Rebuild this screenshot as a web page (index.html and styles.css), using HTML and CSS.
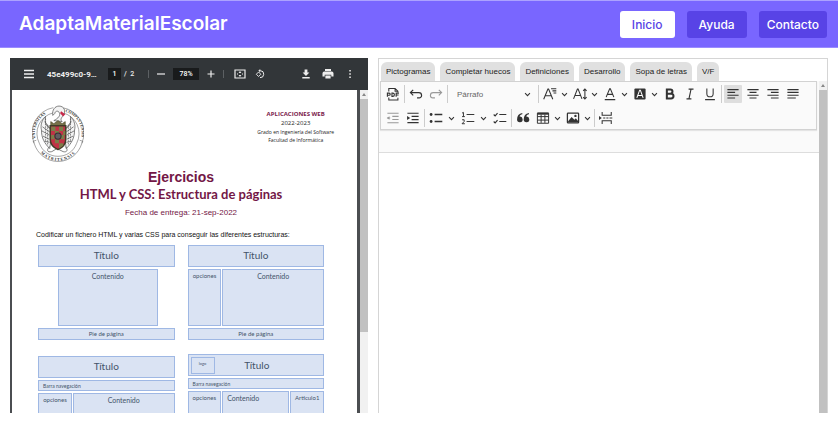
FILE: index.html
```html
<!DOCTYPE html>
<html lang="es">
<head>
<meta charset="utf-8">
<meta name="viewport" content="width=device-width, initial-scale=1">
<title>AdaptaMaterialEscolar</title>
<link rel="stylesheet" href="styles.css">
</head>
<body>
<svg class="defs" aria-hidden="true">
  <symbol id="chev" viewBox="0 0 10 10"><path d="M1.5 3.2 5 6.7l3.500-3.500" fill="none" stroke="currentColor" stroke-width="1.500"/></symbol>
</svg>
<header class="site-header">
  <h1 class="brand">AdaptaMaterialEscolar</h1>
  <nav class="site-nav">
    <a class="nav-link active" href="#inicio">Inicio</a>
    <a class="nav-link" href="#ayuda">Ayuda</a>
    <a class="nav-link wide" href="#contacto">Contacto</a>
  </nav>
</header>

<main class="workspace">
  <section class="viewer" aria-label="Visor PDF">
    <div class="viewer-bar">
      <button class="vbtn menu" aria-label="Menú"><svg viewBox="0 0 10 10"><path d="M0 1.500h10M0 5h10M0 8.500h10" stroke="currentColor" stroke-width="1.300"/></svg></button>
      <span class="file-name">45e499c0-9…</span>
      <input class="dark-box page-no" aria-label="Página" value="1">
      <span class="page-total">/&nbsp; 2</span>
      <span class="vsep"></span>
      <button class="vbtn near" aria-label="Alejar"><svg viewBox="0 0 10 10"><path d="M1 5h8" stroke="currentColor" stroke-width="1.200"/></svg></button>
      <input class="dark-box zoom" aria-label="Zoom" value="78%">
      <button class="vbtn near" aria-label="Acercar"><svg viewBox="0 0 10 10"><path d="M1.500 5h7M5 1.500v7" stroke="currentColor" stroke-width="1.200"/></svg></button>
      <span class="vsep"></span>
      <button class="vbtn fit" aria-label="Ajustar"><svg viewBox="0 0 12 10"><path d="M1 1h10v8H1z" fill="none" stroke="currentColor" stroke-width="1.200"/><path d="M6 2 4.600 3.900h2.800zM6 8 4.600 6.100h2.800z" fill="currentColor"/><path d="M3 5h1M8 5h1" stroke="currentColor"/></svg></button>
      <button class="vbtn rotate" aria-label="Girar"><svg viewBox="0 0 12 12"><path d="M4.300 3.600 7 6.300 4.300 9 1.600 6.300z" fill="none" stroke="currentColor" stroke-width="1.100"/><path d="M5.500 2h1a4.200 4.200 0 1 1-.5 8.400" fill="none" stroke="currentColor" stroke-width="1.200"/><path d="M6.300 0v4L4 2z" fill="currentColor"/></svg></button>
      <span class="grow"></span>
      <button class="vbtn" aria-label="Descargar"><svg viewBox="0 0 10 10"><path d="M3.600.5h2.800v3h2L5 7 1.600 3.500h2zM1.300 8h7.400v1.400H1.300z" fill="currentColor"/></svg></button>
      <button class="vbtn print" aria-label="Imprimir"><svg viewBox="0 0 12 10"><path d="M3 0h6v2H3zM2.200 2.600h7.600A1.800 1.800 0 0 1 11.500 4.300V7.500H9.300V5.800H2.700v1.700H.5V4.300A1.800 1.800 0 0 1 2.200 2.600zM3.400 6.500h5.200v3H3.400z" fill="currentColor"/></svg></button>
      <button class="vbtn" aria-label="Más"><svg viewBox="0 0 10 10"><path d="M4.300 1h1.500v1.500H4.300zM4.300 4.300h1.500v1.500H4.300zM4.300 7.600h1.500v1.500H4.300z" fill="currentColor"/></svg></button>
    </div>
    <div class="viewer-body">
      <article class="page">
        <div class="doc-head">
          <svg class="crest" viewBox="0 0 50 56" role="img" aria-label="Escudo">
            <defs>
              <path id="arc-l" d="M4.500 37A21.500 21.500 0 0 1 21 7"/>
              <path id="arc-r" d="M30 7A21.500 21.500 0 0 1 46 37"/>
              <path id="arc-b" d="M5 42A22 22 0 0 0 45 42"/>
            </defs>
            <g fill="none" stroke="#555" stroke-width=".5">
              <path d="M20.500 3.500A25 25 0 0 0 2 38M20.500 8.500A20.500 20.500 0 0 0 7 38"/>
              <path d="M29.500 3.500A25 25 0 0 1 48 38M29.500 8.500A20.500 20.500 0 0 1 43 38"/>
              <path d="M2 38 1 36l3-1M48 38l1-2-3-1M2 38c3 10 12 17.500 23 17.500S45 48 48 38"/>
              <path d="M7 38c3 8 10 12.500 18 12.500S40 46 43 38"/>
            </g>
            <g class="crest-text">
              <text><textPath href="#arc-l" startOffset="4">VNIVERSITAS</textPath></text>
              <text><textPath href="#arc-r" startOffset="2">COMPLVTENSIS</textPath></text>
              <text><textPath href="#arc-b" startOffset="6">M A T R I T E N S I S</textPath></text>
            </g>
            <g fill="#f4f4f4" stroke="#555" stroke-width=".7">
              <path d="M18 24C14 22 12 19 13 12c-4 4-5 9-4 13 0 8 3 13 8 18l1-7z"/>
              <path d="M32 24c4-2 6-5 5-12 4 4 5 9 4 13 0 8-3 13-8 18l-1-7z"/>
              <path d="M10 22l7 5M9.500 26l7 4M10.500 31l6 3M12 36l5 1M12 17l5 6M40 22l-7 5M40.500 26l-7 4M39.500 31l-6 3M38 36l-5 1M38 17l-5 6" fill="none"/>
              <path d="M13 14v22M15 20v20M37 14v22M35 20v20" fill="none" stroke-dasharray="1.500 1"/>
              <path d="M21 16c4-2 7-5 5-8-1-2-4-1-4 1l-2 2c-1-5 2-9 6-9 5 0 7 5 4 9-2 3-3 4-1 6z"/>
              <path d="M17 41c-3 3-3 6 2 5l5-3 6 3c4 1 5-2 2-5" fill="none"/>
            </g>
            <path d="M28 7l4 3-2 2-3-3z" fill="#c72a4a"/>
            <path d="M18 17l3 2 4-3 4 3 3-2v5H18z" fill="#77714a" stroke="#494725" stroke-width=".6"/>
            <path d="M17.500 21h15v13c0 5-3 8-7.500 10-4.500-2-7.500-5-7.500-10z" fill="#c13246" stroke="#3f3d28" stroke-width="1.400"/>
            <path d="M18.500 22h4v4h-4zM26 22h4v4h-4zM22 26h4v4h-4zM30 26h2v4h-2zM18.500 30h3v4h-3zM27.500 30h3.500v4h-3.500zM22 34h4v4h-4zM26 38h4v2l-4 3z" fill="#7b7e49"/>
            <circle cx="25" cy="31" r="3" fill="#625d61" stroke="#322f35"/>
          </svg>
          <div class="course">
            <strong>APLICACIONES WEB</strong>
            <span class="year">2022-2023</span>
            <span>Grado en Ingeniería del Software</span>
            <span>Facultad de Informática</span>
          </div>
        </div>
        <h2 class="doc-title">Ejercicios</h2>
        <h3 class="doc-sub">HTML y CSS: Estructura de páginas</h3>
        <p class="due">Fecha de entrega: 21-sep-2022</p>
        <p class="intro">Codificar un fichero HTML y varias CSS para conseguir las diferentes estructuras:</p>
        <div class="diagrams">
          <div class="diagram">
            <div class="box big">Título</div>
            <div class="box body inset">Contenido</div>
            <div class="box foot">Pie de página</div>
          </div>
          <div class="diagram">
            <div class="box big">Título</div>
            <div class="cols two"><div class="box body small">opciones</div><div class="box body">Contenido</div></div>
            <div class="box foot">Pie de página</div>
          </div>
          <div class="diagram lower">
            <div class="box big">Título</div>
            <div class="box navrow">Barra navegación</div>
            <div class="cols two"><div class="box body small">opciones</div><div class="box body">Contenido</div></div>
          </div>
          <div class="diagram">
            <div class="box big with-logo"><span class="box logo">logo</span><span>Título</span></div>
            <div class="box navrow">Barra navegación</div>
            <div class="cols three"><div class="box body small">opciones</div><div class="box body start">Contenido</div><div class="box body small">Articulo1</div></div>
          </div>
        </div>
      </article>
      <div class="scroll"><span class="arrow"></span><span class="thumb"></span></div>
    </div>
  </section>

  <section class="editor" aria-label="Editor">
    <div class="tabs">
      <button class="tab">Pictogramas</button>
      <button class="tab">Completar huecos</button>
      <button class="tab">Definiciones</button>
      <button class="tab">Desarrollo</button>
      <button class="tab">Sopa de letras</button>
      <button class="tab">V/F</button>
    </div>
    <div class="editor-body">
      <div class="editor-main">
        <div class="toolbar">
          <div class="row">
            <button class="tb" aria-label="Exportar PDF"><svg viewBox="0 0 20 20"><path d="M4 6.500V2h9l4 4v2M13 2v4h4M4 15v3.500h13V15.500" fill="none" stroke="currentColor" stroke-width="1.500"/><path d="M2 14V8.800h2.500a1.500 1.500 0 0 1 0 3H2M8.500 8.800v4.600h1.200a2.300 2.300 0 0 0 0-4.600zM14.500 14V8.800h4M14.500 11.500H18" fill="none" stroke="currentColor" stroke-width="1.600"/></svg></button>
            <span class="sep"></span>
            <button class="tb" aria-label="Deshacer"><svg viewBox="0 0 20 20"><path d="M6 4 2 8l4 4M2.500 8h11.500a4 4 0 0 1 4 4v0a3.500 3.500 0 0 1-3.500 3.500h-3" fill="none" stroke="currentColor" stroke-width="1.700"/></svg></button>
            <button class="tb dim" aria-label="Rehacer"><svg viewBox="0 0 20 20"><path d="m14 4 4 4-4 4M17.500 8H6a4 4 0 0 0-4 4v0A3.500 3.500 0 0 0 5.500 15.500h3" fill="none" stroke="currentColor" stroke-width="1.600"/></svg></button>
            <span class="sep"></span>
            <span class="heading-pick"><select aria-label="Estilo"><option>Párrafo</option></select><svg class="chev"><use href="#chev"/></svg></span>
            <span class="sep"></span>
            <button class="tb drop" aria-label="Fuente"><svg viewBox="0 0 20 20"><path d="M1 17.500 7 3h1L14 17.500M3 12.500h9M11.500 2.500H19M13.500 5.500H19M15 8.500h4" fill="none" stroke="currentColor" stroke-width="1.500"/></svg><svg class="chev"><use href="#chev"/></svg></button>
            <button class="tb drop" aria-label="Tamaño"><svg viewBox="0 0 20 20"><path d="M.8 17 6.300 3h1L12.800 17M2.600 12.200h8.300M17 3v14M14.500 5.500 17 2.800l2.500 2.700M14.500 14.500 17 17.200l2.500-2.700" fill="none" stroke="currentColor" stroke-width="1.500"/></svg><svg class="chev"><use href="#chev"/></svg></button>
            <button class="tb drop" aria-label="Color"><svg viewBox="0 0 20 20"><path d="M4.500 14.500 9.500 2.500h1l5 12M6.300 10.500h7.400M2.500 18h15" fill="none" stroke="currentColor" stroke-width="1.500"/></svg><svg class="chev"><use href="#chev"/></svg></button>
            <button class="tb drop" aria-label="Fondo"><svg viewBox="0 0 20 20"><rect x="2" y="2" width="16" height="16" rx="1.500" fill="currentColor"/><path d="M5.500 15.500 9.500 4.500h1l4 11M7 12h6" fill="none" stroke="#fff" stroke-width="1.500"/></svg><svg class="chev"><use href="#chev"/></svg></button>
            <button class="tb" aria-label="Negrita"><svg viewBox="0 0 20 20"><path d="M5.500 3.500H10.500a3 3 0 0 1 0 6H5.500zM5.500 9.500h6a3.300 3.300 0 0 1 0 7h-6z" fill="none" stroke="currentColor" stroke-width="2.900"/></svg></button>
            <button class="tb" aria-label="Cursiva"><svg viewBox="0 0 20 20"><path d="M8 3h7M5 17h7M11.500 3l-3 14" fill="none" stroke="currentColor" stroke-width="1.600"/></svg></button>
            <button class="tb" aria-label="Subrayado"><svg viewBox="0 0 20 20"><path d="M5.500 2v7.500a4.500 4.500 0 0 0 9 0V2M3 18h14" fill="none" stroke="currentColor" stroke-width="1.500"/></svg></button>
            <span class="sep"></span>
            <button class="tb on" aria-label="Izquierda" aria-pressed="true"><svg viewBox="0 0 20 20"><path d="M2 3.700h16M2 7.700h11M2 11.700h16M2 15.700h11" stroke="currentColor" stroke-width="1.600"/></svg></button>
            <button class="tb" aria-label="Centro"><svg viewBox="0 0 20 20"><path d="M2 3.700h16M5 7.700h10M2 11.700h16M5 15.700h10" stroke="currentColor" stroke-width="1.600"/></svg></button>
            <button class="tb" aria-label="Derecha"><svg viewBox="0 0 20 20"><path d="M2 3.700h16M7 7.700h11M2 11.700h16M7 15.700h11" stroke="currentColor" stroke-width="1.600"/></svg></button>
            <button class="tb" aria-label="Justificar"><svg viewBox="0 0 20 20"><path d="M2 3.700h16M2 7.700h16M2 11.700h16M2 15.700h12" stroke="currentColor" stroke-width="1.600"/></svg></button>
          </div>
          <div class="row">
            <button class="tb dim" aria-label="Reducir sangría"><svg viewBox="0 0 20 20"><path d="M2 3.200h16M9 7.700h9M9 12.200h9M2 16.700h16M2 10h4" stroke="currentColor" stroke-width="1.500"/><path d="M5 7.500v5L1 10z" fill="currentColor"/></svg></button>
            <button class="tb" aria-label="Aumentar sangría"><svg viewBox="0 0 20 20"><path d="M2 3.200h16M8 7.700h10M8 12.200h10M2 16.700h16" stroke="currentColor" stroke-width="1.700"/><path d="M1.500 7v6L6 10z" fill="currentColor"/></svg></button>
            <span class="sep"></span>
            <button class="tb drop split" aria-label="Lista"><svg viewBox="0 0 20 20"><path d="M8 5h11M8 15h11" stroke="currentColor" stroke-width="1.800"/><circle cx="3" cy="5" r="2" fill="currentColor"/><circle cx="3" cy="15" r="2" fill="currentColor"/></svg><svg class="chev"><use href="#chev"/></svg></button>
            <button class="tb drop split" aria-label="Lista numerada"><svg viewBox="0 0 20 20"><path d="M8 5h11M8 15h11M1.500 3 3.500 2v6M1.500 8h4M1.500 12.500h3V15l-3 3.200h4" fill="none" stroke="currentColor" stroke-width="1.400"/></svg><svg class="chev"><use href="#chev"/></svg></button>
            <button class="tb" aria-label="Tareas"><svg viewBox="0 0 20 20"><path d="M9 5h10M9 15h10M1 5l2 2 3.500-4M1 15l2 2 3.500-4" fill="none" stroke="currentColor" stroke-width="1.600"/></svg></button>
            <span class="sep"></span>
            <button class="tb" aria-label="Cita"><svg viewBox="0 0 20 20"><path d="M9 3C4 4 1.500 7 1.500 12a4 4 0 1 0 3.500-4c.5-2 2-3 4-3.500zM18.500 3c-5 1-7.500 4-7.500 9a4 4 0 1 0 3.500-4c.5-2 2-3 4-3.500z" fill="currentColor"/></svg></button>
            <button class="tb drop" aria-label="Tabla"><svg viewBox="0 0 20 20"><path d="M2 3h16v14.500H2zM2 8h16M2 13h16M7.300 5v12M12.700 5v12" fill="none" stroke="currentColor" stroke-width="1.400"/><path d="M2 2.300h16v3H2z" fill="currentColor"/></svg><svg class="chev"><use href="#chev"/></svg></button>
            <button class="tb drop" aria-label="Imagen"><svg viewBox="0 0 20 20"><rect x="2" y="3" width="16" height="14" rx="1" fill="none" stroke="currentColor" stroke-width="1.800"/><path d="M3 14.500 8 8.500l4 4 2-2 3.500 4V16H3z" fill="currentColor"/><circle cx="13.500" cy="7" r="1.700" fill="currentColor"/></svg><svg class="chev"><use href="#chev"/></svg></button>
            <span class="sep"></span>
            <button class="tb" aria-label="Salto de página"><svg viewBox="0 0 20 20"><path d="M4.500 1.500V6h13V1.500M4.500 18.500V14h13v4.500M6 10h3M10.500 10h3M15 10h4" fill="none" stroke="currentColor" stroke-width="1.500"/><path d="M0 7v6l4-3z" fill="currentColor"/></svg></button>
          </div>
        </div>
        <div class="sheet" contenteditable="true" role="textbox" aria-label="Contenido"></div>
      </div>
      <div class="scroll"><span class="arrow"></span><span class="thumb full"></span></div>
    </div>
  </section>
</main>
</body>
</html>
```
FILE: styles.css
```css
* { box-sizing: border-box; }
body {
  margin: 0;
  height: 100vh;
  display: flex;
  flex-direction: column;
  background: #fff;
  color: #333;
  font-family: "Liberation Sans", Arial, sans-serif;
}
h1, h2, h3, p { margin: 0; }
button, input, select { font: inherit; color: inherit; border: 0; padding: 0; margin: 0; background: none; }
.defs { display: none; }

.site-header {
  flex: none;
  display: flex;
  align-items: center;
  justify-content: space-between;
  height: 48px;
  padding: 0 11px 0 19px;
  background: #7966ff;
  border-top: 1px solid #aca2ff;
  border-bottom: 1px solid #9a8cff;
  font-family: Inter, sans-serif;
}
.brand { color: #fff; font-size: 19px; font-weight: 600; line-height: 24px; }
.site-nav { display: flex; gap: 12px; }
.nav-link {
  padding: 0 12px;
  border-radius: 3px;
  background: #5843e6;
  color: #fff;
  font-size: 12px;
  font-weight: 500;
  line-height: 27px;
  text-decoration: none;
}
.nav-link.wide { padding: 0 8px; }
.nav-link.active { background: #fff; color: #5843e6; }

.workspace {
  flex: 1;
  min-height: 0;
  display: grid;
  grid-template-columns: 358fr 450fr;
  grid-template-rows: minmax(0, 1fr);
  gap: 10px;
  padding: 10px 10px 21px;
}
.viewer, .editor { display: flex; flex-direction: column; min-width: 0; overflow: hidden; }

/* PDF viewer */
.viewer { background: #4b4e51; }
.viewer-bar {
  flex: none;
  display: flex;
  align-items: center;
  height: 32px;
  padding: 0 12px 0 13px;
  background: #323639;
  color: #eee;
  font: 500 7px Roboto, sans-serif;
}
.vbtn { flex: none; width: 12px; height: 12px; display: grid; place-items: center; margin-right: 10px; }
.vbtn:last-child { margin-right: 0; }
.vbtn svg { width: 10px; height: 10px; }
.fit svg, .print svg, .rotate svg { width: 12px; }
.vbtn.menu { margin-right: 12px; }
.vbtn.near { margin-right: 6px; }
.file-name { width: 61px; font-size: 8px; font-weight: 700; }
.dark-box { height: 12px; background: #191b1c; text-align: center; color: #fff; }
.page-no { width: 13px; margin-right: 3px; }
.page-total { width: 24px; }
.zoom { width: 26px; margin-right: 6px; }
.vsep { width: 1px; height: 8px; background: #5c6063; margin-right: 6px; }
.grow { flex: 1; }
.vbtn.fit { margin-right: 8px; margin-left: 4px; }

.viewer-body { flex: 1; min-height: 0; display: flex; }
.page {
  flex: 1;
  min-width: 0;
  margin: 0 3px 0 2px;
  padding: 14px 33px 0 26px;
  background: #fff;
  overflow: hidden;
}
.doc-head { display: flex; justify-content: space-between; align-items: flex-start; }
.crest { width: 52px; height: 58px; margin-left: -6px; }
.crest-text { font: 700 4px "Liberation Serif", serif; fill: #333; }
.course {
  display: flex;
  flex-direction: column;
  align-items: center;
  margin: 6px -10px 0 0;
  color: #222;
  font: 5px/8px "Open Sans", sans-serif;
}
.course strong { font-size: 6px; color: #7b1b4c; line-height: 9px; }
.course .year { font-size: 6px; line-height: 9px; }
.doc-title, .doc-sub, .due { margin-right: -4px; margin-left: -4px; text-align: center; color: #731746; }
.doc-title { margin-top: 7px; font-size: 14px; line-height: 17px; }
.doc-sub { font: 700 13px/16px Lato, sans-serif; }
.due { margin-top: 6px; font-size: 8px; line-height: 10px; }
.intro { margin: 12px 0 5px -2px; font-size: 7px; line-height: 10px; color: #111; white-space: nowrap; }

.diagrams { display: grid; grid-template-columns: 1fr 1fr; gap: 14px 13px; }
.diagram { display: flex; flex-direction: column; gap: 2px; font: 7px/10px Lato, sans-serif; color: #44546a; }
.lower { padding-top: 2px; }
.box { background: #dae3f3; border: 1px solid #9fb8e4; text-align: center; }
.big { height: 22px; font: 10px/18px Lato, sans-serif; }
.body { height: 57px; padding-top: 1px; }
.inset { margin: 0 17px 0 20px; }
.foot { height: 12px; font-size: 6px; }
.navrow { height: 11px; padding-left: 4px; font-size: 5px; text-align: left; }
.small { font-size: 6px; }
.start { text-align: left; padding-left: 4px; }
.cols { display: grid; gap: 1px; }
.two { grid-template-columns: 1fr 3fr; }
.three { grid-template-columns: 1fr 2fr 1fr; }
.with-logo { display: grid; grid-template-columns: 24px 1fr 24px; align-items: center; padding-left: 2px; }
.logo { height: 17px; font-size: 4px; line-height: 12px; }

.scroll { flex: none; width: 8px; display: flex; flex-direction: column; align-items: center; background: #f1f1f1; }
.arrow { width: 0; height: 0; margin: 3px 0; border: 2px solid transparent; border-top: 0; border-bottom: 3px solid #888; }
.thumb { width: 100%; height: 72%; background: #c1c1c1; }
.thumb.full { flex: 1; }

/* Editor */
.editor { border: 1px solid #d5d5d5; border-bottom: 0; }
.tabs { flex: none; display: flex; gap: 5px; padding: 3px 2px 0; }
.tab {
  padding: 0 5px;
  border-radius: 6px 6px 0 0;
  background: #e0e0e0;
  color: #222;
  font-size: 8px;
  line-height: 19px;
}
.editor-body { flex: 1; min-height: 0; display: flex; }
.editor-main { flex: 1; min-width: 0; display: flex; flex-direction: column; background: #fafafa; }
.toolbar {
  flex: none;
  display: flex;
  flex-direction: column;
  gap: 6px;
  margin: 0 2px 22px 1px;
  padding: 3px 3px 2px;
  border: 1px solid #d2d2d2;
  box-shadow: 0 1px 1px #e4e4e4;
}
.row { display: flex; align-items: center; gap: 2px; }
.tb { flex: none; width: 18px; height: 18px; display: flex; align-items: center; justify-content: center; color: #333; border-radius: 1px; }
.tb svg { flex: none; width: 14px; height: 14px; }
.tb .chev, .heading-pick .chev { width: 7px; height: 7px; }
.drop { width: 28px; justify-content: flex-start; gap: 4px; padding-left: 2px; }
.split { width: 30px; gap: 5px; }
.on { background: #dedede; }
.dim { color: #999; }
.sep { width: 1px; height: 18px; background: #ccc; }
.heading-pick { display: flex; align-items: center; width: 86px; height: 18px; padding: 0 5px 0 7px; }
.heading-pick select { flex: 1; appearance: none; font-size: 8px; color: #666; }
.sheet { flex: 1; background: #fff; border-top: 1px solid #ddd; outline: 0; }
```
